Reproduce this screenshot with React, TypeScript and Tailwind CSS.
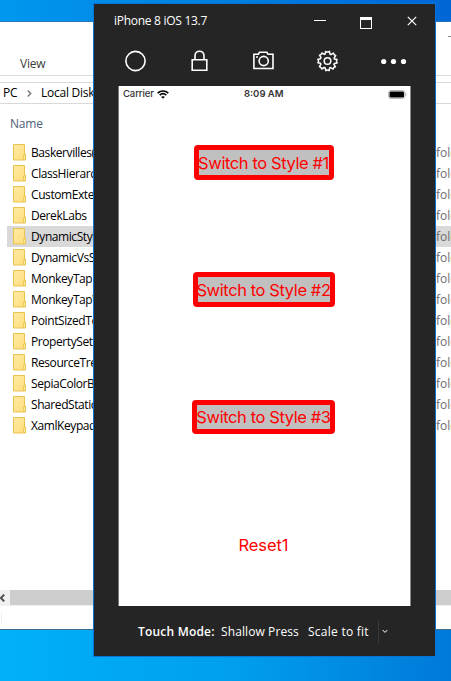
import React from "react";

const folders = [
  "Baskervilles(Class)",
  "ClassHierarchy",
  "CustomExtension",
  "DerekLabs",
  "DynamicStyles",
  "DynamicVsStatic",
  "MonkeyTap",
  "MonkeyTapWithSound",
  "PointSizedText",
  "PropertySetters",
  "ResourceTrees",
  "SepiaColorBox",
  "SharedStatics",
  "XamlKeypad",
];

function Folder() {
  return (
    <svg width="14" height="17" viewBox="0 0 14 17" className="shrink-0">
      <defs>
        <linearGradient id="fold" x1="0" y1="0" x2="1" y2="1">
          <stop offset="0" stopColor="#ffeaa4" />
          <stop offset="1" stopColor="#ffdd7c" />
        </linearGradient>
      </defs>
      <path d="M.5 .5h11v9.5h1v6H.5z" fill="url(#fold)" stroke="#e8c44c" />
      <path d="M10.5 15.5V11h2v4.5z" fill="#ffe89c" stroke="#e8c44c" strokeWidth=".8" />
    </svg>
  );
}

function Explorer() {
  return (
    <div className="absolute left-0 top-[21px] flex h-[609px] w-[451px] flex-col overflow-hidden whitespace-nowrap border-b border-t border-b-[#3c7088] border-t-[#2376b9] bg-white text-[12px] text-black">
      <div className="flex h-[54px] shrink-0 justify-between border-b border-[#dadbdc]">
        <span className="ml-5 mt-[33px] leading-[18px] tracking-[-0.2px] text-[#3b3b3b]">View</span>
        <span className="mt-[14px] h-px w-[3px] bg-[#888]" />
      </div>
      <div className="mt-[6px] flex h-[22px] shrink-0 items-center border-y border-[#d9d9d9]">
        <span className="ml-[3px] w-[24px] tracking-[-0.2px]">PC</span>
        <svg width="5" height="7" viewBox="0 0 5 7" fill="none" stroke="#777" strokeWidth="1.4">
          <path d="M.8 .6L3.7 3.5.8 6.4" />
        </svg>
        <span className="ml-[9px] tracking-[-0.25px]">Local Disk (C:)</span>
      </div>
      <div className="flex h-[38px] shrink-0 items-center pl-[10px] pt-px tracking-[-0.2px] text-[#4c607a]">Name</div>
      <div className="flex flex-col">
        {folders.map((name, i) => (
          <div key={name} className="flex h-[21px] pl-[7px]">
            <div className={"flex flex-1 items-center pl-[6px] " + (i === 4 ? "bg-[#d9d9d9]" : "")}>
              <Folder />
              <span className="ml-[4px] w-[405px] pt-px tracking-[-0.42px]">{name}</span>
              <span className="pt-px text-[#6d6d6d]">folder</span>
            </div>
          </div>
        ))}
      </div>
      <div className="mt-auto flex h-[16px] shrink-0 border-b border-[#f0f0f0] bg-[#cdcdcd]">
        <div className="flex w-[10px] items-center bg-[#f0f0f0]">
          <svg width="5" height="8" viewBox="0 0 5 8" fill="none" stroke="#505050" strokeWidth="2">
            <path d="M4.2 .6L.9 4l3.3 3.4" />
          </svg>
        </div>
      </div>
      <div className="mb-[6px] mt-[6px] h-[11px] w-[2px] shrink-0 border-r border-[#eee]" />
    </div>
  );
}

function Toolbar() {
  return (
    <div className="flex h-[48px] shrink-0 items-center pl-[31px] text-white">
      <svg width="22" height="22" viewBox="0 0 22 22" fill="none" stroke="#fff" strokeWidth="1.6">
        <circle cx="10.5" cy="11" r="9.6" />
      </svg>
      <svg className="ml-[42px]" width="22" height="22" viewBox="0 0 22 22" fill="none" stroke="#fff" strokeWidth="1.6">
        <path d="M3.2 9.8h14.6v10.4H3.2zM6 9.8V6c0-6.4 9-6.4 9 0v3.8" />
      </svg>
      <svg className="ml-[42px]" width="22" height="22" viewBox="0 0 22 22" fill="none" stroke="#fff" strokeWidth="1.6">
        <path d="M.9 4.3h4.4l1.3-2h7.2l1.3 2h4.9v14.2H.9z" />
        <circle cx="10.7" cy="11" r="4.6" />
        <path d="M3 7h2" />
      </svg>
      <svg className="ml-[42px]" width="22" height="22" viewBox="-10.5 -11 22 22" fill="none" stroke="#fff" strokeWidth="1.5" strokeLinejoin="round">
        <path d="M-1.9-9.6Q0-8.2 1.9-9.6L2.6-6.8 3.4-6.3 6-7.9Q6.2-6 8.2-5.5L6.6-2.9 7-1.9 9.6-1.6Q8.4 0 9.6 1.9L6.9 2.4 6.4 3.4 8 5.8Q6 6 5.6 8L3.1 6.6 2.1 7 1.7 9.6Q0 8.4-1.7 9.6L-2.3 7-3.3 6.5-5.8 8Q-6 6-8 5.7L-6.6 3.2-7 2.2-9.6 1.8Q-8.4 0-9.6-1.7L-7-2.3-6.5-3.3-8-5.8Q-6-6-5.7-8L-3.2-6.6-2.3-7z" />
        <circle r="3.3" />
      </svg>
      <svg className="ml-[41px]" width="28" height="22" viewBox="0 0 28 22" fill="#fff">
        <circle cx="3.7" cy="11.5" r="2.6" />
        <circle cx="13.5" cy="11.5" r="2.6" />
        <circle cx="23.5" cy="11.5" r="2.6" />
      </svg>
    </div>
  );
}

function StatusBar() {
  return (
    <div className="flex h-[16px] shrink-0 items-center font-['Inter',sans-serif] text-[9.5px] leading-none text-[#333]">
      <span className="ml-[4px] w-[34px] font-medium tracking-[-0.1px]">Carrier</span>
      <svg width="12" height="9" viewBox="0 0 12 9" fill="none" stroke="#000" strokeWidth="1.7">
        <path d="M.7 3.1c3-2.8 7.6-2.8 10.6 0M2.7 5.2c1.9-1.7 4.7-1.7 6.6 0" />
        <path d="M4.1 6.8c1.1-.9 2.7-.9 3.8 0L6 8.8z" fill="#000" stroke="none" />
      </svg>
      <span className="ml-[75px] font-semibold">8:09 AM</span>
      <svg className="ml-auto mr-[3px]" width="19" height="9" viewBox="0 0 19 9">
        <rect x=".5" y=".5" width="16.5" height="8" rx="2.4" fill="#fff" stroke="#bbb" />
        <rect x="1.5" y="1.5" width="14.5" height="6" rx="1.3" fill="#000" />
        <path d="M17.5 3v3c1.2-.4 1.2-2.6 0-3" fill="#999" />
      </svg>
    </div>
  );
}

const box = "flex items-center justify-center rounded-[4px] border-[5px] border-[#ff0000] bg-[#c0c0c0] text-[16.5px] whitespace-nowrap leading-none tracking-[-0.4px] ";

function Simulator() {
  return (
    <div className="absolute left-[93px] top-[3px] flex h-[654px] w-[343px] flex-col border border-[#0873d2] bg-[#252525]">
      <div className="flex h-[33px] shrink-0 items-center pl-[20px] text-[12px] text-white">
        <span className="w-[200px] tracking-[-0.28px]">iPhone 8 iOS 13.7</span>
        <span className="h-px w-[12px] bg-white" />
        <span className="ml-[34px] mt-[4px] h-[12px] w-[12px] border border-t-[3px] border-white" />
        <svg className="ml-[35px]" width="10" height="10" viewBox="0 0 10 10" stroke="#fff" strokeWidth="1.2">
          <path d="M.8 .8l8.4 8.4M9.2 .8L.8 9.2" />
        </svg>
      </div>
      <Toolbar />
      <div className="ml-[24px] mt-px flex h-[520px] w-[293px] shrink-0 flex-col border-x border-l-[#777] border-r-[#888] bg-white">
        <StatusBar />
        <div className="flex flex-col items-center pr-[2px] font-['Inter',sans-serif] text-[#ff0000]">
          <div className={box + "mt-[43px] h-[35px] w-[140px] pt-[2px]"}>Switch to Style #1</div>
          <div className={box + "mt-[92px] h-[35px] w-[142px] pt-[2px]"}>Switch to Style #2</div>
          <div className={box + "mt-[93px] h-[34px] w-[143px] pt-px"}>Switch to Style #3</div>
          <div className="mt-[101px] text-[16.5px] leading-[20px] tracking-[-0.1px]">Reset1</div>
        </div>
      </div>
      <div className="flex flex-1 items-center whitespace-nowrap pl-[44px] pt-px text-[12px] text-white">
        <span className="w-[83px] font-semibold tracking-[0.2px]">Touch Mode:</span>
        <span className="w-[87px] tracking-[0.1px]">Shallow Press</span>
        <span className="w-[70px] tracking-[0.25px]">Scale to fit</span>
        <span className="h-[22px] w-px bg-[#3a3a3a]" />
        <svg className="ml-[3px]" width="6" height="5" viewBox="0 0 6 5" fill="none" stroke="#fff">
          <path d="M.7 1L3 3.4 5.3 1" />
        </svg>
      </div>
    </div>
  );
}

export default function App() {
  return (
    <div className="relative h-[681px] w-[451px] overflow-hidden bg-linear-to-r from-[#0098ee] to-[#0066d6] font-['Open_Sans','Noto_Sans',sans-serif]">
      <div className="h-[340px]" />
      <div className="h-[341px] bg-linear-to-r from-[#00b0f8] via-[#00a0ee] to-[#0079da]" />
      <Explorer />
      <Simulator />
    </div>
  );
}
